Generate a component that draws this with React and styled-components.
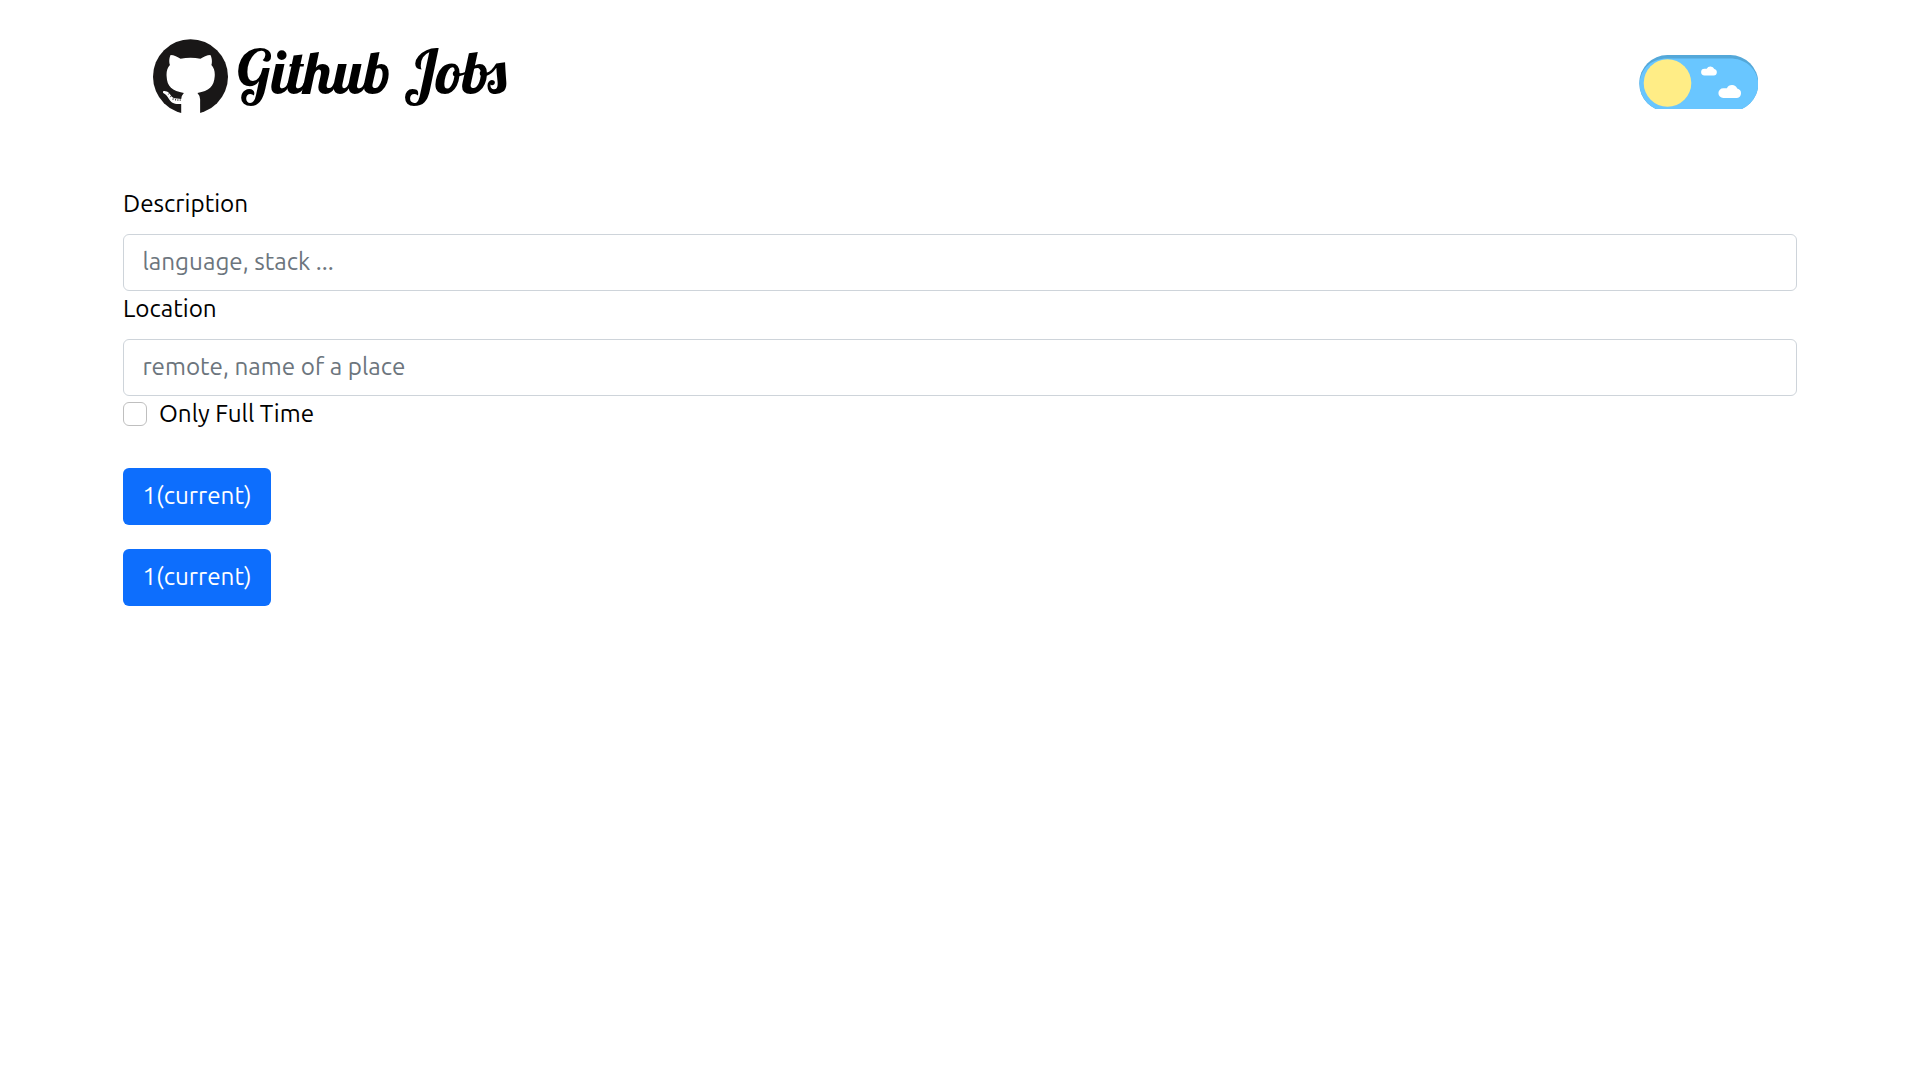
import React from "react";
import styled, { createGlobalStyle } from "styled-components";

const GlobalStyle = createGlobalStyle`
  *, *::before, *::after { box-sizing: border-box; }
  body {
    margin: 0;
    background: #fff;
    color: #000;
    font-family: Ubuntu, "Noto Sans", "Open Sans", sans-serif;
    font-size: 24.28px;
    line-height: 34px;
  }
`;

const Page = styled.div`
  width: 1674px;
  margin: 0 auto;
  padding-top: 39px;
`;

const Header = styled.header`
  display: flex;
  justify-content: space-between;
  align-items: flex-start;
  height: 147px;
  padding: 0 39px 0 30px;
`;

const Brand = styled.div`
  display: flex;
`;

const Mark = styled.svg`
  display: block;
  width: 75px;
  height: 74px;
  flex: none;
`;

const Title = styled.h1`
  margin: 0 0 0 9px;
  font-family: Lobster, "Liberation Serif", serif;
  font-weight: 500;
  font-size: 60px;
  line-height: 66px;
  white-space: nowrap;
`;

const Toggle = styled.svg`
  display: block;
  width: 119px;
  height: 54px;
  margin-top: 16px;
`;

const Form = styled.form`
  display: flex;
  flex-direction: column;
`;

const Label = styled.label`
  display: block;
  height: 36px;
  margin-bottom: 12px;
  white-space: nowrap;
`;

const Input = styled.input`
  display: block;
  width: 100%;
  height: 57px;
  padding: 8px 18.4px 11px;
  border: 1px solid #ced4da;
  border-radius: 6px;
  background: #fff;
  font: inherit;
  &::placeholder { color: #6c757d; opacity: 1; }
`;

const CheckRow = styled.div`
  display: flex;
  align-items: flex-start;
  height: 36px;
  gap: 12px;
`;

const Checkbox = styled.input`
  appearance: none;
  width: 24px;
  height: 24px;
  margin: 6px 0 0;
  border: 1px solid #bfbfbf;
  border-radius: 6px;
  background: #fff;
`;

const Pages = styled.nav`
  display: flex;
  flex-direction: column;
  align-items: flex-start;
  gap: 24px;
  margin-top: 36px;
`;

const PageButton = styled.button`
  width: 148px;
  height: 57px;
  padding: 0 0 3px;
  border: 0;
  border-radius: 6px;
  background: #0d6efd;
  color: #fff;
  font: inherit;
`;

function GithubMark() {
  return (
    <Mark viewBox="23 27 226 222">
      <circle cx="136" cy="140" r="113" fill="#191717" />
      <path
        fill="#fff"
        d="M76 75 C86 75 98 81 106 86 Q136 80 166 86 C174 81 186 75 196 75 C202 86 201 99 199 105 C207 114 210 124 209 139 C207 170 192 184 157 189 Q164 196 165 208 V252 H108 V222 C88 225 77 217 71 207 C65 197 60 192 54 189 C50 183 57 181 65 185 C77 191 76 202 88 205 L108 207 Q109 196 116 189 C81 184 65 170 64 139 C63 124 66 114 74 105 C71 98 71 86 76 75Z"
      />
      <path
        d="M72 190l-3 4M78 197l-3 5M84 205l-1 5M91 207v5M98 208v5M105 208v5"
        stroke="#191717"
        strokeWidth="2.5"
      />
    </Mark>
  );
}

function DayToggle() {
  return (
    <Toggle viewBox="0 0 119 54">
      <rect x="0.3" y="0" width="119" height="56.5" rx="28" fill="#54a8d9" />
      <path d="M0.5 28C2 13 13 3.5 28 3.5H91C106 3.5 118 13 119.3 28A28.2 28.2 0 0 1 91 56.5H28A28 28 0 0 1 .5 28Z" fill="#69c6ff" />
      <circle cx="28.5" cy="28" r="23.8" fill="#ffed86" />
      <path fill="#fff" d="M65.5 20.5a3.4 3.4 0 0 1 0-6.8h2.2a4.2 4.2 0 0 1 7.6 0.3a3.3 3.3 0 0 1-.5 6.5Z" />
      <path fill="#fff" d="M84.3 43a4.9 4.9 0 0 1 0-9.8h3.6a5.6 5.6 0 0 1 10.3.2a4.9 4.9 0 0 1-.2 9.6Z" />
    </Toggle>
  );
}

export default function App() {
  return (
    <>
      <GlobalStyle />
      <Page>
        <Header>
          <Brand>
            <GithubMark />
            <Title>Github Jobs</Title>
          </Brand>
          <DayToggle />
        </Header>
        <Form>
          <Label htmlFor="description">Description</Label>
          <Input id="description" placeholder="language, stack ..." />
          <Label htmlFor="location">Location</Label>
          <Input id="location" placeholder="remote, name of a place" />
          <CheckRow>
            <Checkbox id="full-time" type="checkbox" />
            <label htmlFor="full-time">Only Full Time</label>
          </CheckRow>
        </Form>
        <Pages>
          <PageButton>1(current)</PageButton>
          <PageButton>1(current)</PageButton>
        </Pages>
      </Page>
    </>
  );
}
